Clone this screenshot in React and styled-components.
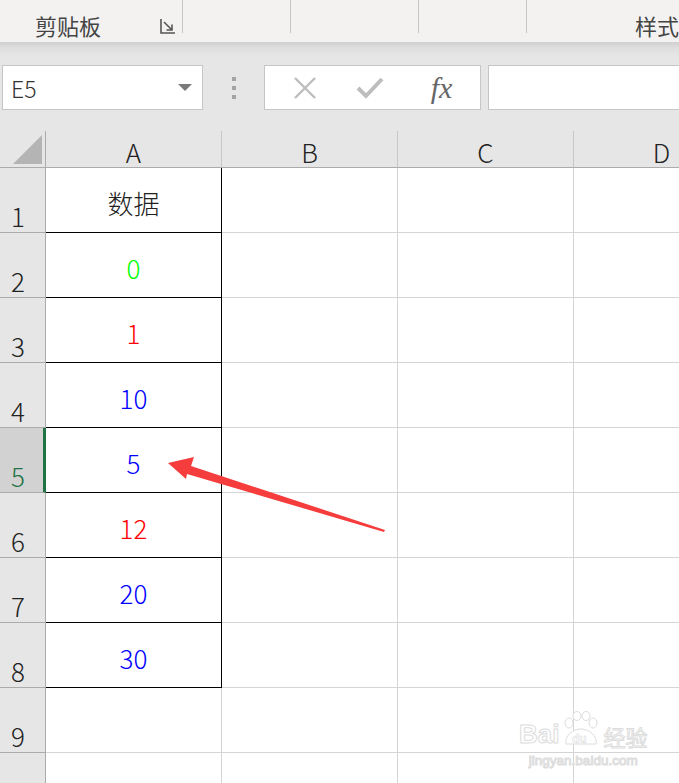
import styled, { createGlobalStyle } from "styled-components";

const GlobalStyle = createGlobalStyle`
  html, body {
    margin: 0;
    padding: 0;
    background: #ffffff;
    overflow: hidden;
  }
  * {
    box-sizing: border-box;
  }
`;

const Page = styled.div`
  position: relative;
  width: 679px;
  height: 783px;
  overflow: hidden;
  font-family: "Noto Sans CJK SC", "Noto Sans", sans-serif;
`;

const Ribbon = styled.div`
  display: flex;
  height: 42px;
  background: #f3f2f1;
`;

const RibbonGroup = styled.div`
  position: relative;
  display: flex;
  align-items: center;
  flex: ${(p) => (p.$grow ? "1" : "none")};
  justify-content: ${(p) => (p.$right ? "flex-end" : "flex-start")};
  width: ${(p) => (p.$w ? `${p.$w}px` : "auto")};
  padding-left: ${(p) => p.$pl || 0}px;
  color: #444;
  font-size: 22px;
  white-space: nowrap;
  overflow: hidden;
  &::after {
    content: "";
    display: ${(p) => (p.$grow ? "none" : "block")};
    position: absolute;
    right: 0;
    top: 0;
    height: 33px;
    width: 1px;
    background: #c8c6c4;
  }
`;

const GroupLabel = styled.span`
  line-height: 1;
  margin-top: 7px;
`;

const Launcher = styled.svg`
  position: absolute;
  left: 160px;
  top: 18px;
`;

const FormulaArea = styled.div`
  display: flex;
  align-items: flex-start;
  height: 89px;
  padding: 23px 0 0 2px;
  background: linear-gradient(#cfcfcf 0px, #dedede 6px, #e6e6e6 14px);
`;

const NameBox = styled.div`
  display: flex;
  align-items: center;
  justify-content: space-between;
  width: 201px;
  height: 45px;
  padding: 0 10px 0 8px;
  background: #fff;
  border: 1px solid #c6c6c6;
  color: #333;
  font-size: 23px;
  font-weight: 300;
`;

const DropArrow = styled.span`
  width: 0;
  height: 0;
  border-left: 7px solid transparent;
  border-right: 7px solid transparent;
  border-top: 7px solid #7a7a7a;
`;

const Grip = styled.div`
  display: flex;
  flex-direction: column;
  align-items: center;
  justify-content: center;
  gap: 5px;
  width: 61px;
  height: 45px;
  & > span {
    width: 4px;
    height: 4px;
    background: #a3a3a3;
  }
`;

const FxBox = styled.div`
  display: flex;
  align-items: center;
  justify-content: space-around;
  width: 217px;
  height: 45px;
  padding: 0 8px;
  background: #fff;
  border: 1px solid #c6c6c6;
`;

const Fx = styled.span`
  font-family: "Liberation Serif", serif;
  font-style: italic;
  font-size: 30px;
  line-height: 1;
  color: #666;
  margin-left: 8px;
`;

const FormulaInput = styled.div`
  flex: 1;
  height: 45px;
  margin-left: 7px;
  background: #fff;
  border: 1px solid #c6c6c6;
  border-right: none;
`;

const Grid = styled.div`
  display: grid;
  grid-template-columns: 46px repeat(4, 176px);
  grid-template-rows: 37px;
  grid-auto-rows: 65px;
  font-family: "Noto Sans CJK SC", "Noto Sans", sans-serif;
  font-weight: 300;
`;

const Corner = styled.div`
  position: relative;
  background: #e6e6e6;
  border-right: 1px solid #ababab;
  border-bottom: 1px solid #ababab;
  &::after {
    content: "";
    position: absolute;
    right: 3px;
    bottom: 3px;
    width: 29px;
    height: 29px;
    background: #b4b4b4;
    clip-path: polygon(100% 0, 100% 100%, 0 100%);
  }
`;

const ColHead = styled.div`
  display: flex;
  align-items: center;
  justify-content: center;
  padding-top: 5px;
  background: #e6e6e6;
  border-right: 1px solid #c6c6c6;
  border-bottom: 1px solid #ababab;
  color: #222;
  font-size: 26px;
`;

const RowHead = styled.div`
  display: flex;
  align-items: flex-end;
  padding: 0 0 1px 11px;
  background: ${(p) => (p.$active ? "#d2d2d2" : "#e6e6e6")};
  border-right: ${(p) => (p.$active ? "3px solid #217346" : "1px solid #ababab")};
  border-bottom: 1px solid #ababab;
  color: ${(p) => (p.$active ? "#217346" : "#222")};
  font-size: 26px;
  line-height: 1.2;
`;

const Cell = styled.div`
  display: flex;
  align-items: center;
  justify-content: center;
  padding-top: 5px;
  background: #fff;
  border-right: 1px solid ${(p) => (p.$boxed ? "#000" : "#d4d4d4")};
  border-bottom: 1px solid ${(p) => (p.$boxed ? "#000" : "#d4d4d4")};
  color: ${(p) => p.$color || "#222"};
  font-size: 26px;
`;

const Overlay = styled.svg`
  position: absolute;
  left: 0;
  top: 0;
  pointer-events: none;
`;

const Watermark = styled.div`
  position: absolute;
  left: 519px;
  top: 711px;
  display: flex;
  flex-direction: column;
  align-items: center;
  color: #fff;
  -webkit-text-stroke: 1px #dcdcdc;
  font-family: "Liberation Sans", sans-serif;
  pointer-events: none;
`;

const MarkTop = styled.div`
  display: flex;
  align-items: flex-end;
  gap: 2px;
  font-size: 26px;
  font-weight: 700;
  line-height: 1;
  & > em {
    font-style: normal;
    font-family: "Noto Sans CJK SC", sans-serif;
    font-size: 22px;
    font-weight: 400;
  }
`;

const MarkUrl = styled.div`
  font-size: 13.5px;
  margin-top: 6px;
`;

const rows = [
  { n: 1, text: "数据", color: "#222" },
  { n: 2, text: "0", color: "#00ff00" },
  { n: 3, text: "1", color: "#ff0000" },
  { n: 4, text: "10", color: "#0000ff" },
  { n: 5, text: "5", color: "#0000ff" },
  { n: 6, text: "12", color: "#ff0000" },
  { n: 7, text: "20", color: "#0000ff" },
  { n: 8, text: "30", color: "#0000ff" },
  { n: 9 },
  { n: 10, hideLabel: true },
];

function App() {
  return (
    <Page>
      <GlobalStyle />
      <Ribbon>
        <RibbonGroup $w={183} $pl={35}>
          <GroupLabel>剪贴板</GroupLabel>
          <Launcher width="16" height="16" viewBox="0 0 16 16">
            <path d="M1 1 V15 H15" fill="none" stroke="#555" strokeWidth="1.6" />
            <path d="M4 4 L12 12 M12 6.5 V12 H6.5" fill="none" stroke="#555" strokeWidth="1.6" />
          </Launcher>
        </RibbonGroup>
        <RibbonGroup $w={108} />
        <RibbonGroup $w={128} />
        <RibbonGroup $w={108} />
        <RibbonGroup $grow $right>
          <GroupLabel>样式</GroupLabel>
        </RibbonGroup>
      </Ribbon>

      <FormulaArea>
        <NameBox>
          E5
          <DropArrow />
        </NameBox>
        <Grip>
          <span />
          <span />
          <span />
        </Grip>
        <FxBox>
          <svg width="24" height="24" viewBox="0 0 24 24">
            <path d="M2 2 L22 22 M22 2 L2 22" stroke="#bdbdbd" strokeWidth="2.4" />
          </svg>
          <svg width="28" height="24" viewBox="0 0 28 24">
            <path d="M2 12 L10 20 L26 3" fill="none" stroke="#bdbdbd" strokeWidth="4" />
          </svg>
          <Fx>fx</Fx>
        </FxBox>
        <FormulaInput />
      </FormulaArea>

      <Grid>
        <Corner />
        {["A", "B", "C", "D"].map((c) => (
          <ColHead key={c}>{c}</ColHead>
        ))}
        {rows.map((r) => [
          <RowHead key={`h${r.n}`} $active={r.n === 5}>
            {r.hideLabel ? null : r.n}
          </RowHead>,
          <Cell key={`a${r.n}`} $boxed={r.n <= 8} $color={r.color}>
            {r.text}
          </Cell>,
          <Cell key={`b${r.n}`} />,
          <Cell key={`c${r.n}`} />,
          <Cell key={`d${r.n}`} />,
        ])}
      </Grid>

      <Overlay width="679" height="783" viewBox="0 0 679 783">
        <polygon
          points="168,463 194,457 191,466 385,530 384,532 187,474 186,479"
          fill="#f63d3d"
        />
      </Overlay>

      <Watermark>
        <MarkTop>
          Bai
          <svg width="40" height="36" viewBox="0 0 40 36">
            <g fill="#fff" stroke="#dcdcdc" strokeWidth="1">
              <ellipse cx="8" cy="12" rx="4" ry="5" />
              <ellipse cx="16" cy="5" rx="4" ry="4.5" />
              <ellipse cx="25" cy="5" rx="4" ry="4.5" />
              <ellipse cx="32" cy="12" rx="4" ry="5" />
              <path d="M5 33 C3 25 12 18 20 18 C28 18 37 25 35 33 Z" />
            </g>
            <text x="11" y="32" fontSize="12" fill="#fff" stroke="#dcdcdc" strokeWidth="0.6" fontFamily="Liberation Sans">du</text>
          </svg>
          <em>经验</em>
        </MarkTop>
        <MarkUrl>jingyan.baidu.com</MarkUrl>
      </Watermark>
    </Page>
  );
}

export default App;
